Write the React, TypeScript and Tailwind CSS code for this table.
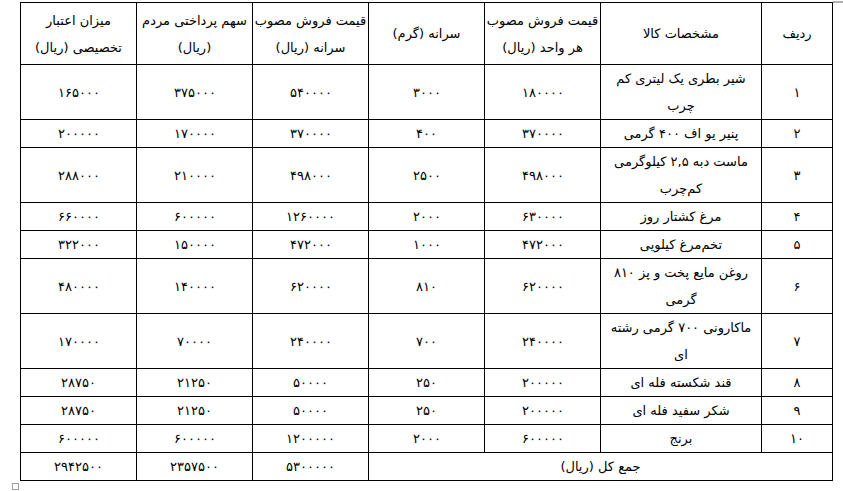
import React from "react";

interface Row {
  id: string;
  name: React.ReactNode;
  unitPrice: string;
  perCapita: string;
  perCapitaPrice: string;
  share: string;
  credit: string;
  tall?: boolean;
}

const rows: Row[] = [
  { id: "۱", name: <>شیر بطری یک لیتری کم<br />چرب</>, unitPrice: "۱۸۰۰۰۰", perCapita: "۳۰۰۰", perCapitaPrice: "۵۴۰۰۰۰", share: "۳۷۵۰۰۰", credit: "۱۶۵۰۰۰", tall: true },
  { id: "۲", name: "پنیر یو اف ۴۰۰ گرمی", unitPrice: "۳۷۰۰۰۰", perCapita: "۴۰۰", perCapitaPrice: "۳۷۰۰۰۰", share: "۱۷۰۰۰۰", credit: "۲۰۰۰۰۰" },
  { id: "۳", name: <>ماست دبه ۲,۵ کیلوگرمی<br />کم‌چرب</>, unitPrice: "۴۹۸۰۰۰", perCapita: "۲۵۰۰", perCapitaPrice: "۴۹۸۰۰۰", share: "۲۱۰۰۰۰", credit: "۲۸۸۰۰۰", tall: true },
  { id: "۴", name: "مرغ کشتار روز", unitPrice: "۶۳۰۰۰۰", perCapita: "۲۰۰۰", perCapitaPrice: "۱۲۶۰۰۰۰", share: "۶۰۰۰۰۰", credit: "۶۶۰۰۰۰" },
  { id: "۵", name: "تخم‌مرغ کیلویی", unitPrice: "۴۷۲۰۰۰", perCapita: "۱۰۰۰", perCapitaPrice: "۴۷۲۰۰۰", share: "۱۵۰۰۰۰", credit: "۳۲۲۰۰۰" },
  { id: "۶", name: <>روغن مایع پخت و پز ۸۱۰<br />گرمی</>, unitPrice: "۶۲۰۰۰۰", perCapita: "۸۱۰", perCapitaPrice: "۶۲۰۰۰۰", share: "۱۴۰۰۰۰", credit: "۴۸۰۰۰۰", tall: true },
  { id: "۷", name: <>ماکارونی ۷۰۰ گرمی رشته<br />ای</>, unitPrice: "۲۴۰۰۰۰", perCapita: "۷۰۰", perCapitaPrice: "۲۴۰۰۰۰", share: "۷۰۰۰۰", credit: "۱۷۰۰۰۰", tall: true },
  { id: "۸", name: "قند شکسته فله ای", unitPrice: "۲۰۰۰۰۰", perCapita: "۲۵۰", perCapitaPrice: "۵۰۰۰۰", share: "۲۱۲۵۰", credit: "۲۸۷۵۰" },
  { id: "۹", name: "شکر سفید فله ای", unitPrice: "۲۰۰۰۰۰", perCapita: "۲۵۰", perCapitaPrice: "۵۰۰۰۰", share: "۲۱۲۵۰", credit: "۲۸۷۵۰" },
  { id: "۱۰", name: "برنج", unitPrice: "۶۰۰۰۰۰", perCapita: "۲۰۰۰", perCapitaPrice: "۱۲۰۰۰۰۰", share: "۶۰۰۰۰۰", credit: "۶۰۰۰۰۰" },
];

const cell = "border border-black text-center align-middle p-0 leading-[27px] whitespace-nowrap";
const num = `${cell} tracking-[2px] font-light`;

export default function App() {
  return (
    <div
      className="w-[843px] h-[491px] bg-white text-black text-[13px] relative overflow-hidden"
      style={{ fontFamily: '"DejaVu Sans", Tahoma, sans-serif' }}
    >
      {/* word table marker */}
      <div className="absolute right-0 top-[1px] w-[10px] h-[2px] bg-[#b0b0b0]" />
      <div className="pt-[2px] pl-[20px]">
        <table dir="rtl" className="table-fixed border-collapse w-[812px]">
          <colgroup>
            <col className="w-[71px]" />
            <col className="w-[161px]" />
            <col className="w-[116px]" />
            <col className="w-[116px]" />
            <col className="w-[116px]" />
            <col className="w-[116px]" />
            <col className="w-[116px]" />
          </colgroup>
          <thead>
            <tr className="h-[62px]">
              <th className={`${cell} font-normal`}>ردیف</th>
              <th className={`${cell} font-normal`}>مشخصات کالا</th>
              <th className={`${cell} font-normal`}>قیمت فروش مصوب<br />هر واحد (ریال)</th>
              <th className={`${cell} font-normal`}>سرانه (گرم)</th>
              <th className={`${cell} font-normal`}>قیمت فروش مصوب<br />سرانه (ریال)</th>
              <th className={`${cell} font-normal`}>سهم پرداختی مردم<br />(ریال)</th>
              <th className={`${cell} font-normal`}>میزان اعتبار<br />تخصیصی (ریال)</th>
            </tr>
          </thead>
          <tbody>
            {rows.map((r) => (
              <tr key={r.id} className={r.tall ? "h-[55px]" : "h-[28px]"}>
                <td className={cell}>{r.id}</td>
                <td className={cell}>{r.name}</td>
                <td className={num}>{r.unitPrice}</td>
                <td className={num}>{r.perCapita}</td>
                <td className={num}>{r.perCapitaPrice}</td>
                <td className={num}>{r.share}</td>
                <td className={num}>{r.credit}</td>
              </tr>
            ))}
            <tr className="h-[28px]">
              <td className={cell} colSpan={4}>جمع کل (ریال)</td>
              <td className={num}>۵۳۰۰۰۰۰</td>
              <td className={num}>۲۳۵۷۵۰۰</td>
              <td className={num}>۲۹۴۲۵۰۰</td>
            </tr>
          </tbody>
        </table>
        <div className="ml-[-8px] mt-[2px] w-[7px] h-[7px] border border-[#a0a0a0]" />
      </div>
    </div>
  );
}
